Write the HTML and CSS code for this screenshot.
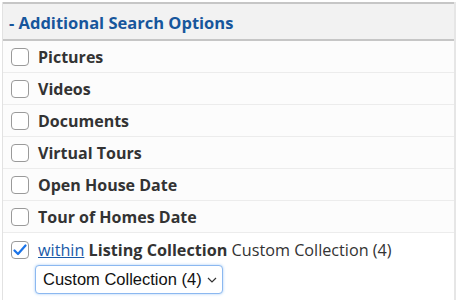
FILE: index.html
```html
<!DOCTYPE html>
<html lang="en">
<head>
    <meta charset="UTF-8">
    <title>Additional Search Options</title>
    <link rel="stylesheet" href="styles.css">
</head>
<body>
    <div class="options-panel">
        <div class="panel-header">- Additional Search Options</div>
        <div class="option-row"><span class="box"></span><span class="label">Pictures</span></div>
        <div class="option-row"><span class="box"></span><span class="label">Videos</span></div>
        <div class="option-row"><span class="box"></span><span class="label">Documents</span></div>
        <div class="option-row"><span class="box"></span><span class="label">Virtual Tours</span></div>
        <div class="option-row"><span class="box"></span><span class="label">Open House Date</span></div>
        <div class="option-row"><span class="box"></span><span class="label">Tour of Homes Date</span></div>
        <div class="option-row checked-row">
            <div class="row-line">
                <span class="box checked">
                    <svg width="14" height="12" viewBox="0 0 14 12"><path d="M1.5 6.5 L5 10 L12.5 1.5" fill="none" stroke="#1a73e8" stroke-width="2.2" stroke-linecap="round" stroke-linejoin="round"/></svg>
                </span>
                <span><a href="#" class="within">within</a> <b>Listing Collection</b> Custom Collection (4)</span>
            </div>
            <div class="select-box">Custom Collection (4)
                <svg width="10" height="6" viewBox="0 0 10 6"><path d="M1 1 L5 5 L9 1" fill="none" stroke="#333" stroke-width="1.2"/></svg>
            </div>
        </div>
    </div>
</body>
</html>
```
FILE: styles.css
```css
* {
    margin: 0;
    padding: 0;
    box-sizing: border-box;
}

body {
    font-family: 'Open Sans', sans-serif;
    background-color: #ffffff;
    padding: 2px 2px 0 2px;
}

.options-panel {
    border-left: 1px solid #e2e2e2;
    border-right: 2px solid #e6e6e6;
    height: 298px;
    background-color: #fcfcfc;
}

.panel-header {
    background-color: #f2f2f2;
    border-top: 2px solid #c6c6c6;
    border-bottom: 2px solid #c6c6c6;
    color: #17569c;
    font-weight: 700;
    font-size: 16.5px;
    height: 39px;
    line-height: 33px;
    padding: 2px 0 0 6px;
}

.option-row {
    display: flex;
    align-items: center;
    height: 32px;
    border-bottom: 1px solid #ececec;
    padding-left: 8px;
    color: #333333;
    font-weight: 700;
    font-size: 16px;
}

.box {
    width: 18px;
    height: 18px;
    border: 1px solid #9a9a9a;
    border-radius: 4px;
    background-color: #ffffff;
    margin-right: 9px;
    display: flex;
    align-items: center;
    justify-content: center;
}

.checked-row {
    display: block;
    height: auto;
    border-bottom: none;
    background-color: #ffffff;
    font-weight: 400;
    padding-top: 7px;
    padding-bottom: 10px;
}

.row-line {
    display: flex;
    align-items: center;
    height: 20px;
    font-size: 16.2px;
}

.row-line b {
    font-weight: 700;
}

.within {
    color: #1a5aa8;
    text-decoration: underline;
}

.select-box {
    display: inline-flex;
    align-items: center;
    gap: 5px;
    margin: 5px 0 0 24px;
    height: 29px;
    padding: 0 5px 0 7px;
    border: 1px solid #8cb8f0;
    border-radius: 4px;
    box-shadow: 0 0 3px #a6ccf5;
    background-color: #ffffff;
    font-family: 'Liberation Sans', Arial, sans-serif;
    font-weight: 400;
    font-size: 16.5px;
    color: #111111;
}
```
